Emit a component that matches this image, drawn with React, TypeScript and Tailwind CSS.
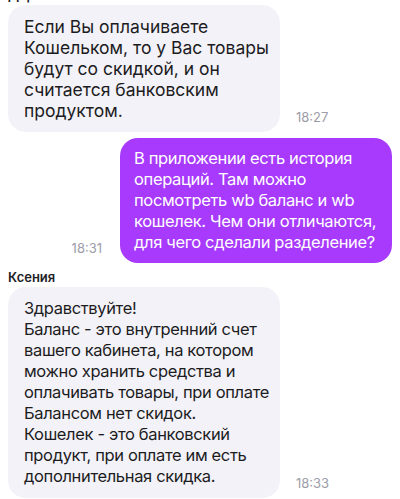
import React from "react";

type Msg = {
  id: number;
  author?: string;
  mine: boolean;
  time: string;
  compact?: boolean;
  lines: string[];
};

const messages: Msg[] = [
  {
    id: 1,
    author: "Дарья",
    mine: false,
    time: "18:27",
    lines: [
      "Если Вы оплачиваете",
      "Кошельком, то у Вас товары",
      "будут со скидкой, и он",
      "считается банковским",
      "продуктом.",
    ],
  },
  {
    id: 2,
    mine: true,
    time: "18:31",
    compact: true,
    lines: [
      "В приложении есть история",
      "операций. Там можно",
      "посмотреть wb баланс и wb",
      "кошелек. Чем они отличаются,",
      "для чего сделали разделение?",
    ],
  },
  {
    id: 3,
    author: "Ксения",
    mine: false,
    time: "18:33",
    compact: true,
    lines: [
      "Здравствуйте!",
      "Баланс - это внутренний счет",
      "вашего кабинета, на котором",
      "можно хранить средства и",
      "оплачивать товары, при оплате",
      "Балансом нет скидок.",
      "Кошелек - это банковский",
      "продукт, при оплате им есть",
      "дополнительная скидка.",
    ],
  },
];

function Bubble({ m }: { m: Msg }) {
  const size = m.compact
    ? "text-[16.5px] tracking-[-0.35px]"
    : "text-[17.5px]";
  const body = (
    <div
      className={
        (m.mine
          ? "w-[272px] rounded-[18px] bg-[#a73afd] px-[14px] py-[10px] leading-[21px] text-white "
          : "w-[272px] rounded-[18px] bg-[#f3f2f8] px-[16px] py-[11px] leading-[21px] text-[#1c1c1e] ") +
        size
      }
    >
      {m.lines.map((l, i) => (
        <span key={i} className="block whitespace-nowrap">
          {l}
        </span>
      ))}
    </div>
  );
  const time = (
    <span className="mb-[7px] text-[13px] leading-[16px] text-[#9d9ca8]">{m.time}</span>
  );
  return (
    <div className="flex flex-col">
      {m.author && (
        <div className="text-[13px] font-semibold leading-[16px] text-[#222226]">{m.author}</div>
      )}
      {m.mine ? (
        <div className="flex items-end justify-end gap-[18px]">
          {time}
          {body}
        </div>
      ) : (
        <div className="mt-[2px] flex items-end gap-[16px]">
          {body}
          {time}
        </div>
      )}
    </div>
  );
}

export default function App() {
  return (
    <div
      className="h-[499px] w-[400px] overflow-hidden bg-white"
      style={{ fontFamily: "Inter, 'Noto Sans', sans-serif" }}
    >
      <div className="mt-[-13px] flex flex-col gap-[6px] pl-[8px] pr-[8px]">
        {messages.map((m) => (
          <Bubble key={m.id} m={m} />
        ))}
      </div>
    </div>
  );
}
